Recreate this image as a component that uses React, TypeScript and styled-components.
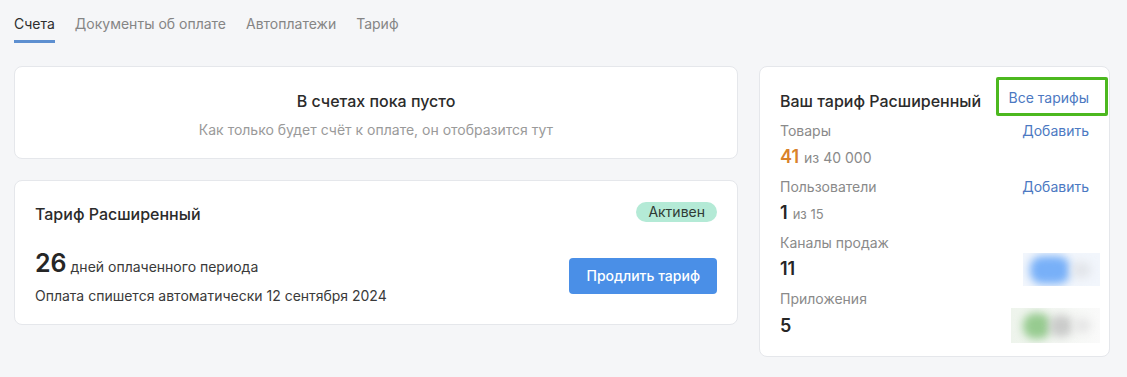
import styled, { createGlobalStyle } from 'styled-components';

const tabs = ['Счета', 'Документы об оплате', 'Автоплатежи', 'Тариф'];

const limits = [
  { label: 'Товары', value: '41', total: 'из 40 000', accent: true, action: 'Добавить' },
  { label: 'Пользователи', value: '1', total: 'из 15', action: 'Добавить' },
  { label: 'Каналы продаж', value: '11', logo: 'blue' as const },
  { label: 'Приложения', value: '5', logo: 'green' as const },
];

const App = () => {
  return (
    <Page>
      <GlobalStyle />
      <TabBar>
        {tabs.map((tab, i) => (
          <Tab key={tab} $active={i === 0}>
            {tab}
          </Tab>
        ))}
      </TabBar>

      <Layout>
        <Column>
          <EmptyCard>
            <EmptyTitle>В счетах пока пусто</EmptyTitle>
            <EmptyText>Как только будет счёт к оплате, он отобразится тут</EmptyText>
          </EmptyCard>

          <Card>
            <CardHeader>
              <CardTitle>Тариф Расширенный</CardTitle>
              <Badge>Активен</Badge>
            </CardHeader>
            <PlanRow>
              <div>
                <Days>
                  <BigNumber>26</BigNumber>
                  <DaysText>дней оплаченного периода</DaysText>
                </Days>
                <PayNote>Оплата спишется автоматически 12 сентября 2024</PayNote>
              </div>
              <PrimaryButton>Продлить тариф</PrimaryButton>
            </PlanRow>
          </Card>
        </Column>

        <SideCard>
          <SideHeader>
            <CardTitle>Ваш тариф Расширенный</CardTitle>
            <AllPlans>Все тарифы</AllPlans>
          </SideHeader>

          <LimitList>
            {limits.map((item) => (
              <LimitItem key={item.label}>
                <LimitLine>
                  <LimitLabel>{item.label}</LimitLabel>
                  {item.action && <TextLink>{item.action}</TextLink>}
                </LimitLine>
                <LimitLine>
                  <Value>
                    <ValueNumber $accent={item.accent}>{item.value}</ValueNumber>
                    {item.total && <ValueTotal $large={item.accent}>{item.total}</ValueTotal>}
                  </Value>
                  {item.logo === 'blue' && (
                    <BlurBox $w={77} $h={33} $bg="#f2f6fc">
                      <BlurShape $l={7} $t={3} $w={40} $h={28} $c="#78b0f8" />
                      <BlurShape $l={48} $t={9} $w={20} $h={16} $c="#e2e5ea" />
                    </BlurBox>
                  )}
                  {item.logo === 'green' && (
                    <BlurBox $w={89} $h={35} $bg="linear-gradient(90deg, #eef4ec, #fafafa)">
                      <BlurShape $l={12} $t={5} $w={28} $h={26} $c="#97cb90" />
                      <BlurShape $l={38} $t={7} $w={24} $h={22} $c="#cacbca" />
                      <BlurShape $l={62} $t={10} $w={18} $h={15} $c="#e6e6e6" />
                    </BlurBox>
                  )}
                </LimitLine>
              </LimitItem>
            ))}
          </LimitList>
        </SideCard>
      </Layout>
    </Page>
  );
};

export default App;

const GlobalStyle = createGlobalStyle`
  body {
    margin: 0;
    background: #f5f6f8;
    font-family: Inter, "Noto Sans", sans-serif;
    color: #2b2b2b;
  }
`;

const Page = styled.div`
  min-height: 377px;
  padding: 0 14px;
  box-sizing: border-box;
  background: #f5f6f8;
`;

const TabBar = styled.nav`
  display: flex;
  gap: 20px;
`;

const Tab = styled.div<{ $active?: boolean }>`
  padding: 15px 0 8px;
  font-size: 14px;
  line-height: 17px;
  color: ${(p) => (p.$active ? '#2e2e2e' : '#858585')};
  border-bottom: 3px solid ${(p) => (p.$active ? '#5d8fd0' : 'transparent')};
`;

const Layout = styled.div`
  display: grid;
  grid-template-columns: 724px 351px;
  gap: 21px;
  margin-top: 23px;
  align-items: start;
`;

const Column = styled.div`
  display: flex;
  flex-direction: column;
  gap: 21px;
`;

const Card = styled.section`
  background: #ffffff;
  border: 1px solid #e5e7eb;
  border-radius: 8px;
  padding: 20px 20px 19px;
`;

const EmptyCard = styled(Card)`
  padding: 24px 20px 19px;
  text-align: center;
`;

const EmptyTitle = styled.div`
  font-size: 16px;
  font-weight: 500;
  line-height: 20px;
  color: #2b2b2b;
`;

const EmptyText = styled.div`
  margin-top: 10px;
  font-size: 14px;
  line-height: 18px;
  color: #9a9a9a;
`;

const CardHeader = styled.div`
  display: flex;
  align-items: center;
  justify-content: space-between;
  height: 26px;
`;

const CardTitle = styled.h2`
  margin: 0;
  font-size: 16px;
  font-weight: 500;
  line-height: 20px;
  color: #2b2b2b;
`;

const Badge = styled.span`
  height: 20px;
  padding: 0 12px;
  margin-top: -4px;
  border-radius: 10px;
  background: #b4ead6;
  color: #2f3a35;
  font-size: 14px;
  line-height: 20px;
`;

const PlanRow = styled.div`
  display: flex;
  align-items: center;
  justify-content: space-between;
  margin-top: 21px;
`;

const Days = styled.div`
  display: flex;
  align-items: baseline;
  gap: 4px;
  height: 30px;
`;

const BigNumber = styled.span`
  font-size: 25px;
  font-weight: 600;
  line-height: 30px;
  color: #262626;
`;

const DaysText = styled.span`
  font-size: 14px;
  color: #3a3a3a;
`;

const PayNote = styled.div`
  margin-top: 9px;
  font-size: 14px;
  line-height: 18px;
  color: #3a3a3a;
`;

const PrimaryButton = styled.button`
  height: 36px;
  padding: 0 17px;
  margin-top: -2px;
  border: none;
  border-radius: 4px;
  background: #4a8fe7;
  color: #ffffff;
  font-family: inherit;
  font-size: 14px;
  font-weight: 500;
`;

const SideCard = styled(Card)`
  padding: 20px 20px 18px;
`;

const SideHeader = styled.div`
  display: flex;
  align-items: center;
  justify-content: space-between;
  height: 28px;
`;

const TextLink = styled.span`
  font-size: 14px;
  line-height: 20px;
  color: #4c79c2;
`;

const AllPlans = styled(TextLink)`
  position: relative;
  margin-top: -6px;

  &::after {
    content: '';
    position: absolute;
    inset: -11px -19px -8px -13px;
    border: 3px solid #4cb81f;
    border-radius: 2px;
  }
`;

const LimitList = styled.div`
  display: flex;
  flex-direction: column;
  gap: 8px;
  margin-top: 6px;
`;

const LimitItem = styled.div`
  display: flex;
  flex-direction: column;
  gap: 4px;
`;

const LimitLine = styled.div`
  display: flex;
  align-items: center;
  justify-content: space-between;
  min-height: 20px;
`;

const LimitLabel = styled.span`
  font-size: 14px;
  line-height: 20px;
  color: #8a8a8a;
`;

const Value = styled.div`
  display: flex;
  align-items: baseline;
  gap: 5px;
  height: 24px;
`;

const ValueNumber = styled.span<{ $accent?: boolean }>`
  font-size: 18px;
  font-weight: 600;
  line-height: 24px;
  color: ${(p) => (p.$accent ? '#d9822b' : '#262626')};
`;

const ValueTotal = styled.span<{ $large?: boolean }>`
  font-size: ${(p) => (p.$large ? '14px' : '13px')};
  color: #8a8a8a;
`;

const BlurBox = styled.div<{ $w: number; $h: number; $bg: string }>`
  position: relative;
  width: ${(p) => p.$w}px;
  height: ${(p) => p.$h}px;
  margin: -5px -11px -5px 0;
  background: ${(p) => p.$bg};
  overflow: hidden;
`;

const BlurShape = styled.div<{ $l: number; $t: number; $w: number; $h: number; $c: string }>`
  position: absolute;
  left: ${(p) => p.$l}px;
  top: ${(p) => p.$t}px;
  width: ${(p) => p.$w}px;
  height: ${(p) => p.$h}px;
  border-radius: 12px;
  background: ${(p) => p.$c};
  filter: blur(4px);
`;
